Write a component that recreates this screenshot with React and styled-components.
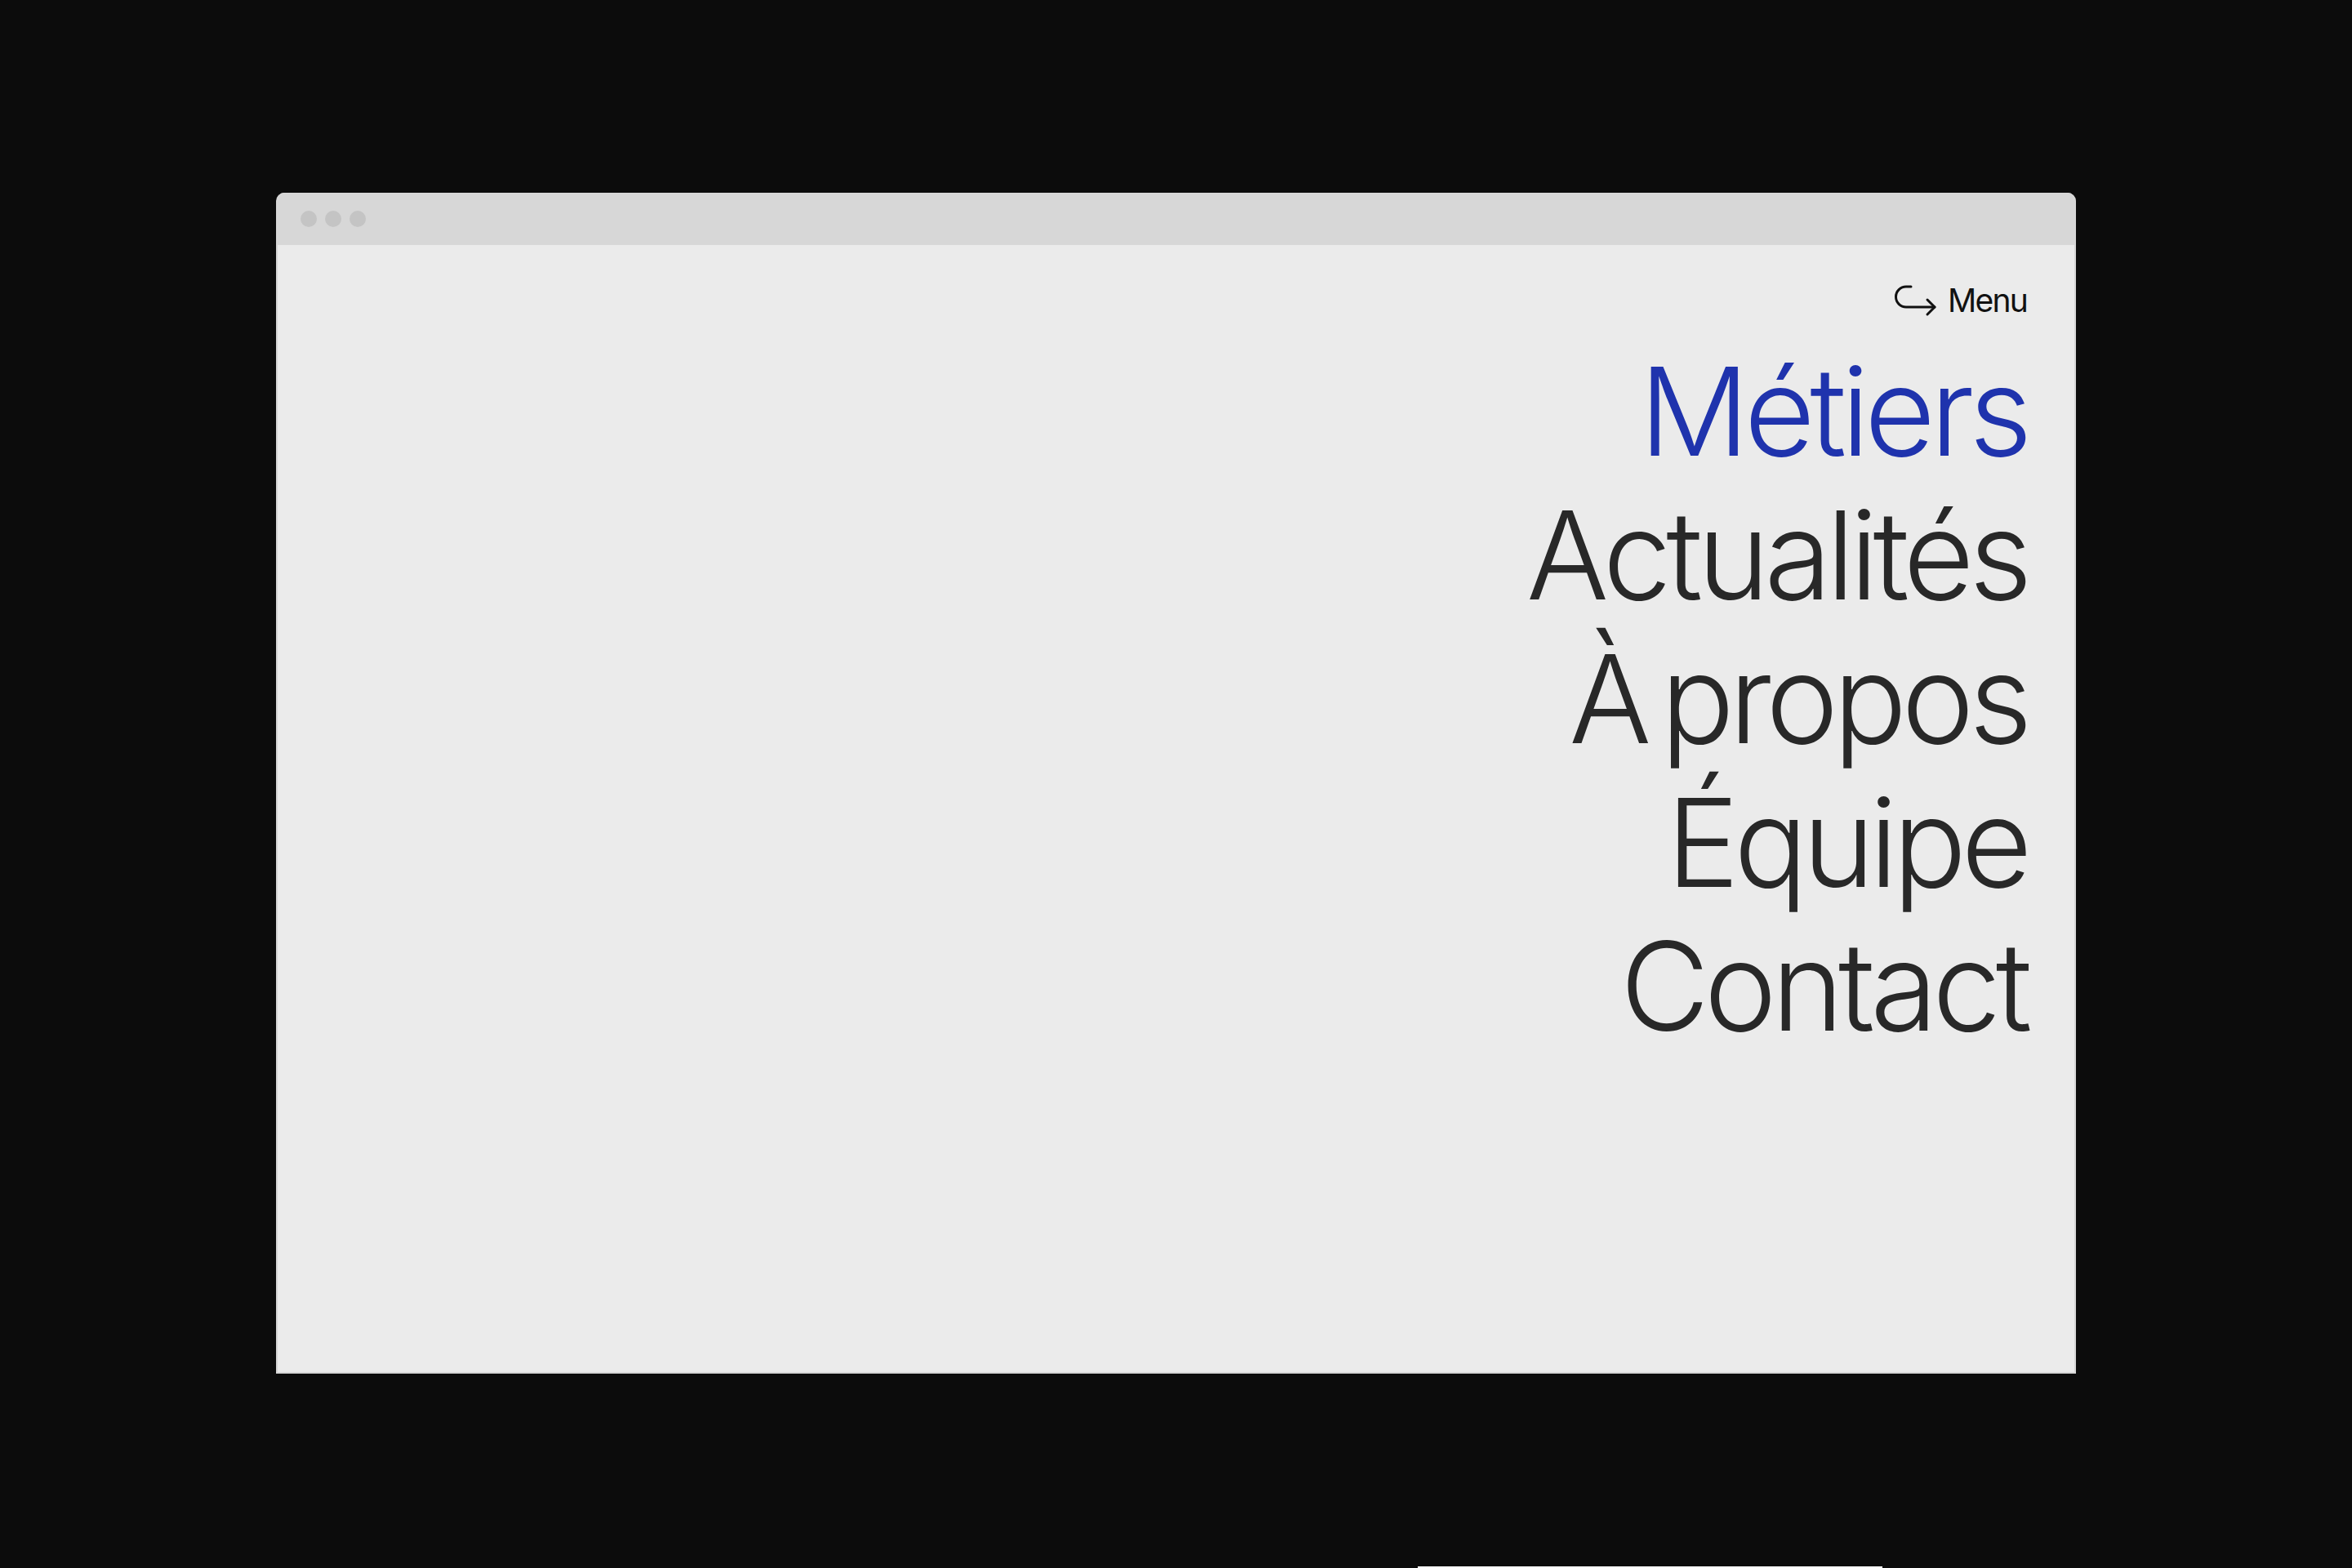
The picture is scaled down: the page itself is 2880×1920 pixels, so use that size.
import React from 'react';
import styled, { createGlobalStyle } from 'styled-components';

const GlobalStyle = createGlobalStyle`
  html, body {
    margin: 0;
    padding: 0;
    background: #0c0c0c;
  }
  * {
    box-sizing: border-box;
  }
`;

const Page = styled.div`
  position: relative;
  width: 2880px;
  height: 1920px;
  padding: 236px 0 0 338px;
  background: #0c0c0c;
  font-family: Inter, "Noto Sans", sans-serif;
`;

const Window = styled.div`
  width: 2204px;
  height: 1446px;
  display: flex;
  flex-direction: column;
  border: 2px solid #d7d7d7;
  border-top: none;
  border-radius: 10px 10px 0 0;
  overflow: hidden;
  background: #ebebeb;
`;

const TitleBar = styled.div`
  height: 64px;
  flex: none;
  display: flex;
  align-items: center;
  gap: 10px;
  padding: 0 0 0 28px;
  background: #d7d7d7;
`;

const Dot = styled.span`
  width: 20px;
  height: 20px;
  border-radius: 50%;
  background: #c4c4c4;
`;

const Content = styled.div`
  flex: 1;
  display: flex;
  flex-direction: column;
  align-items: flex-end;
  padding: 44px 58px 0 0;
`;

const MenuToggle = styled.div`
  display: flex;
  align-items: center;
  gap: 13px;
  height: 48px;
  font-size: 39px;
  line-height: 48px;
  font-weight: 400;
  color: #111111;
  letter-spacing: -0.045em;
`;

const NavList = styled.nav`
  display: flex;
  flex-direction: column;
  align-items: flex-end;
  margin-top: 24px;
`;

const NavItem = styled.a`
  display: block;
  font-size: 150px;
  line-height: 176px;
  font-weight: 300;
  letter-spacing: -0.043em;
  word-spacing: -0.12em;
  color: ${(p) => (p.$active ? '#1f33ad' : '#282828')};
  text-decoration: none;
  white-space: nowrap;
`;

const StrayBar = styled.div`
  position: absolute;
  left: 1736px;
  bottom: 0;
  width: 569px;
  height: 2px;
  background: #ffffff;
`;

const HookArrow = () => (
  <svg width="52" height="40" viewBox="0 0 52 40" fill="none">
    <path
      d="M20 3 H14 A12.5 12.5 0 0 0 14 28 H49"
      stroke="#111111"
      strokeWidth="3"
      strokeLinecap="round"
      strokeLinejoin="round"
    />
    <path
      d="M40 19 L49 28 L40 37"
      stroke="#111111"
      strokeWidth="3"
      strokeLinecap="round"
      strokeLinejoin="round"
    />
  </svg>
);

const items = ['Métiers', 'Actualités', 'À propos', 'Équipe', 'Contact'];

export default function App() {
  return (
    <>
      <GlobalStyle />
      <Page>
        <Window>
          <TitleBar>
            <Dot />
            <Dot />
            <Dot />
          </TitleBar>
          <Content>
            <MenuToggle>
              <HookArrow />
              <span>Menu</span>
            </MenuToggle>
            <NavList>
              {items.map((label, i) => (
                <NavItem key={label} href="#" $active={i === 0}>
                  {label}
                </NavItem>
              ))}
            </NavList>
          </Content>
        </Window>
        <StrayBar />
      </Page>
    </>
  );
}
